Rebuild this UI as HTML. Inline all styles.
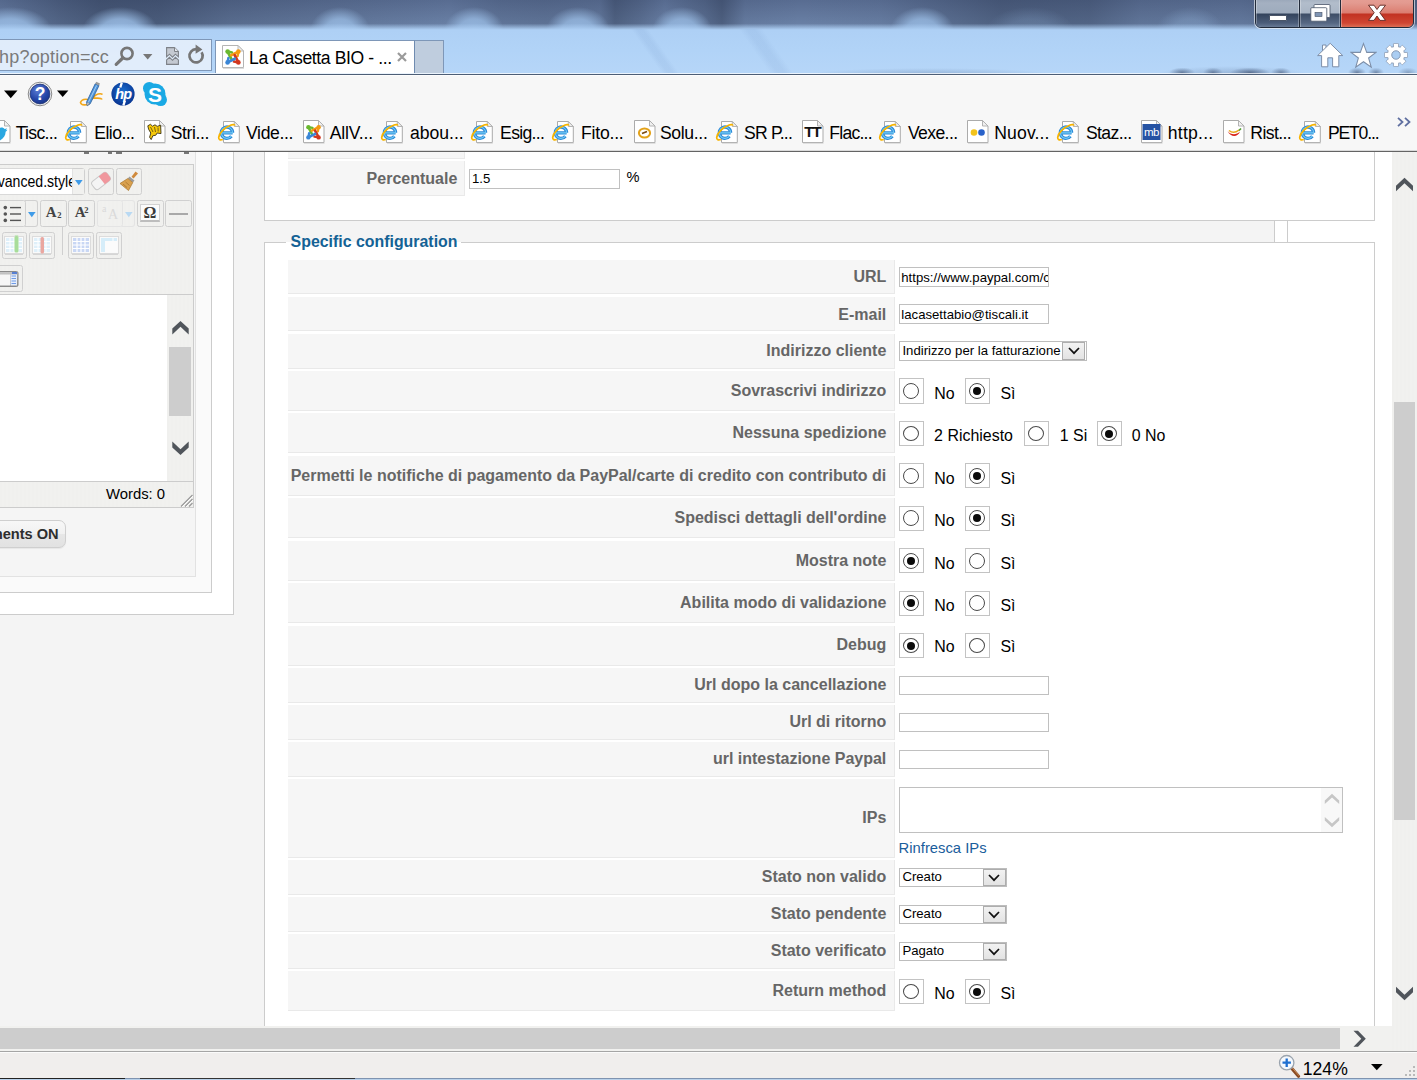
<!DOCTYPE html>
<html lang="it"><head><meta charset="utf-8"><title>La Casetta BIO - Amministrazione</title>
<style>
*{box-sizing:border-box;margin:0;padding:0}
html,body{width:1417px;height:1080px;overflow:hidden;background:#fff}
body{position:relative;font-family:"Liberation Sans",Arial,sans-serif;color:#000}
div,span,svg,a,b,i{position:absolute;display:block;white-space:nowrap}
.ui{font-family:"Liberation Sans",Arial,sans-serif;color:#000}
.lbl{font-weight:bold;color:#666}
.rad{border:1px solid #c3c3c3;background:#fff}
.rad i{left:3px;width:16px;border:1px solid #4a4a4a;border-radius:50%;background:#fff}
.inp{border:1px solid #c0c0c0;background:#fff;overflow:hidden}
.cell{background:#f6f6f6;border-bottom:1px solid #e9e9e9;border-right:1px solid #e9e9e9}
.tb{border:1px solid #d0d0d0;border-radius:2.5px}
</style></head>
<body>

<div style="left:0px;top:0px;width:1417px;height:74px;background:radial-gradient(ellipse 13px 5px at 1182px 72.500px, rgba(48,64,96,0.55), rgba(60,80,115,0) 100%),radial-gradient(ellipse 10px 5px at 1213px 72.500px, rgba(48,64,96,0.5), rgba(60,80,115,0) 100%),radial-gradient(ellipse 20px 5px at 1250px 72.500px, rgba(48,64,96,0.6), rgba(60,80,115,0) 100%),radial-gradient(ellipse 10px 5px at 1281px 72.500px, rgba(48,64,96,0.5), rgba(60,80,115,0) 100%),radial-gradient(ellipse 9px 5px at 1357px 72.500px, rgba(48,64,96,0.55), rgba(60,80,115,0) 100%),radial-gradient(ellipse 8px 5px at 1376px 72.500px, rgba(48,64,96,0.5), rgba(60,80,115,0) 100%),radial-gradient(ellipse 10px 5px at 1408px 72.500px, rgba(48,64,96,0.35), rgba(60,80,115,0) 100%),radial-gradient(ellipse 75px 8px at 1232px 74px, rgba(70,92,130,.28), rgba(60,80,115,0) 100%),radial-gradient(ellipse 120px 6px at 930px 74px, rgba(80,105,145,.3), rgba(80,105,145,0) 100%),linear-gradient(to bottom, rgba(172,206,243,0) 23.5px, rgba(172,206,243,.5) 27px, rgba(174,208,245,1) 30px, rgba(177,211,247,1) 50px, rgba(182,214,248,1) 74px),radial-gradient(ellipse 42px 24px at 10px 31px, rgba(152,186,226,1) 0, rgba(150,184,224,0.85) 50%, rgba(146,178,218,0) 100%),radial-gradient(ellipse 38px 24px at 120px 31px, rgba(152,186,226,1) 0, rgba(150,184,224,0.85) 50%, rgba(146,178,218,0) 100%),radial-gradient(ellipse 30px 24px at 340px 31px, rgba(152,186,226,0.95) 0, rgba(150,184,224,0.81) 50%, rgba(146,178,218,0) 100%),radial-gradient(ellipse 30px 24px at 474px 31px, rgba(152,186,226,0.95) 0, rgba(150,184,224,0.81) 50%, rgba(146,178,218,0) 100%),radial-gradient(ellipse 32px 24px at 578px 31px, rgba(152,186,226,0.95) 0, rgba(150,184,224,0.81) 50%, rgba(146,178,218,0) 100%),radial-gradient(ellipse 30px 24px at 682px 31px, rgba(152,186,226,0.95) 0, rgba(150,184,224,0.81) 50%, rgba(146,178,218,0) 100%),radial-gradient(ellipse 32px 24px at 922px 31px, rgba(152,186,226,0.95) 0, rgba(150,184,224,0.81) 50%, rgba(146,178,218,0) 100%),radial-gradient(ellipse 34px 24px at 1190px 31px, rgba(152,186,226,0.35) 0, rgba(150,184,224,0.30) 50%, rgba(146,178,218,0) 100%),radial-gradient(ellipse 44px 24px at 1030px 31px, rgba(152,186,226,0.25) 0, rgba(150,184,224,0.21) 50%, rgba(146,178,218,0) 100%),linear-gradient(90deg,rgba(28,38,60,0.05) 0px,rgba(28,38,60,0.3) 60px,rgba(28,38,60,0.42) 100px,rgba(28,38,60,0.4) 160px,rgba(28,38,60,0.22) 230px,rgba(28,38,60,0.12) 320px,rgba(28,38,60,0.05) 400px,rgba(28,38,60,0.0) 450px,rgba(28,38,60,0.12) 500px,rgba(28,38,60,0.15) 545px,rgba(28,38,60,0.1) 600px,rgba(28,38,60,0.34) 615px,rgba(28,38,60,0.2) 640px,rgba(28,38,60,0.02) 665px,rgba(28,38,60,0.22) 705px,rgba(28,38,60,0.36) 722px,rgba(28,38,60,0.06) 745px,rgba(28,38,60,0.0) 800px,rgba(28,38,60,0.04) 880px,rgba(28,38,60,0.22) 950px,rgba(28,38,60,0.34) 1000px,rgba(28,38,60,0.3) 1090px,rgba(28,38,60,0.12) 1140px,rgba(28,38,60,0.08) 1240px,rgba(28,38,60,0.2) 1300px,rgba(28,38,60,0.25) 1417px),linear-gradient(to bottom,#586c91 0px,#61769b 12px,#6980a5 24px,#7a93b8 29px,#a9cbf0 33px);"></div>
<div style="left:646px;top:29px;width:18px;height:44px;background:linear-gradient(90deg,rgba(110,145,195,0),rgba(110,145,195,.13) 35%,rgba(110,145,195,.13) 65%,rgba(110,145,195,0));transform:skewX(35deg)"></div>
<div style="left:754px;top:29px;width:24px;height:44px;background:linear-gradient(90deg,rgba(110,145,195,0),rgba(110,145,195,.13) 35%,rgba(110,145,195,.13) 65%,rgba(110,145,195,0));transform:skewX(35deg)"></div>
<div style="left:0px;top:73px;width:1417px;height:1px;background:rgba(255,255,255,.72)"></div>
<div style="left:0px;top:74px;width:1417px;height:1px;background:#4d5e76"></div>
<div style="left:-10px;top:39px;width:222px;height:32px;border:1px solid #7e97b8;background:rgba(236,243,251,.8);"></div>
<span class="ui" style="left:-1px;top:48.36px;font-size:18.0px;line-height:18.0px;color:#7a7a7a;letter-spacing:0.2px">hp?option=cc</span>
<svg style="left:113px;top:44px" width="24" height="24" viewBox="0 0 24 24"><circle cx="14" cy="9.5" r="5.6" fill="none" stroke="#767676" stroke-width="2.6"/><path d="M9.8 14 L3.2 20.4" stroke="#767676" stroke-width="3.2" stroke-linecap="round"/></svg>
<svg style="left:143.300px;top:54px" width="10" height="6" viewBox="0 0 10 6"><path d="M0 0H9.4L4.7 5.4Z" fill="#777"/></svg>
<svg style="left:166px;top:46.500px" width="13" height="18" viewBox="0 0 13 18"><path d="M.6 .6H8.500L12.400 4.500V9.800L9.400 7.200 6.500 10.200 3.500 7.200 .6 9.800Z" fill="#c4c9d1" stroke="#7d8187" stroke-width="1.100"/><path d="M.6 17.400V12.900L3.500 10.300 6.500 13.300 9.400 10.300 12.400 12.900V17.400Z" fill="#c4c9d1" stroke="#7d8187" stroke-width="1.100"/><path d="M8.500 .6V4.500H12.400" fill="#e3e7ec" stroke="#7d8187" stroke-width="1"/></svg>
<svg style="left:186px;top:43px" width="20" height="22" viewBox="0 0 20 22"><path d="M15.6 9.2A6.6 6.6 0 1 1 10.2 6.2" fill="none" stroke="#767676" stroke-width="2.7"/><path d="M9.6 1.6L16.4 6.4 9.6 10.8Z" fill="#767676"/></svg>
<div style="left:215px;top:40px;width:200px;height:33px;background:#fff;border:1px solid #7e97b8;border-bottom:none;"></div>
<div style="left:414px;top:40px;width:30px;height:33px;background:#bfcdde;border:1px solid #7e97b8;border-left:1.500px solid #6f8bb0;border-bottom:none;"></div>
<svg style="left:222px;top:45px" width="23" height="24" viewBox="0 0 23 24"><path d="M.5 .5H16L21.500 6V22.500H.5Z" fill="#fff" stroke="#b4b4b4"/><path d="M16 .5V6H21.500Z" fill="#f0f0f0" stroke="#b4b4b4" stroke-width=".9"/><path d="M1 23.300H22" stroke="#cfcfcf" stroke-width=".9"/><g transform="translate(11 12) rotate(0) scale(1.0)" stroke="#69b82f" fill="#69b82f" stroke-linecap="round"><circle cx="-5.400" cy="-5.400" r="2.300" stroke="none"/><path d="M-5.400 -5.400L-1.700 1.800" stroke-width="2.700" fill="none"/><path d="M-5.400 -5.400L-1 -4.600" stroke-width="2.500" fill="none"/></g><g transform="translate(11 12) rotate(90) scale(1.0)" stroke="#f49a12" fill="#f49a12" stroke-linecap="round"><circle cx="-5.400" cy="-5.400" r="2.300" stroke="none"/><path d="M-5.400 -5.400L-1.700 1.800" stroke-width="2.700" fill="none"/><path d="M-5.400 -5.400L-1 -4.600" stroke-width="2.500" fill="none"/></g><g transform="translate(11 12) rotate(180) scale(1.0)" stroke="#d2371f" fill="#d2371f" stroke-linecap="round"><circle cx="-5.400" cy="-5.400" r="2.300" stroke="none"/><path d="M-5.400 -5.400L-1.700 1.800" stroke-width="2.700" fill="none"/><path d="M-5.400 -5.400L-1 -4.600" stroke-width="2.500" fill="none"/></g><g transform="translate(11 12) rotate(270) scale(1.0)" stroke="#3a86d6" fill="#3a86d6" stroke-linecap="round"><circle cx="-5.400" cy="-5.400" r="2.300" stroke="none"/><path d="M-5.400 -5.400L-1.700 1.800" stroke-width="2.700" fill="none"/><path d="M-5.400 -5.400L-1 -4.600" stroke-width="2.500" fill="none"/></g></svg>
<span class="ui" style="left:249px;top:49.70px;font-size:17.6px;line-height:17.6px;letter-spacing:-0.39px">La Casetta BIO - ...</span>
<svg style="left:397px;top:52px" width="10" height="10" viewBox="0 0 10 10"><path d="M1 1L9 9M9 1L1 9" stroke="#9a9a9a" stroke-width="2.2"/></svg>
<div style="left:1255px;top:-6px;width:159px;height:34px;border:1px solid #222b3a;border-radius:6px;box-shadow:0 0 0 1px rgba(255,255,255,.6);overflow:hidden;"><div style="left:0px;top:0px;width:44px;height:34px;background:linear-gradient(to bottom,#8c9aae 0,#a4b0c1 8px,#9eabbd 18px,#33435c 19px,#4c5d79 28px,#6f819c 33px);border-right:1px solid #222b3a;box-shadow:inset 0 0 0 1px rgba(255,255,255,.3)"></div><div style="left:44px;top:0px;width:41px;height:34px;background:linear-gradient(to bottom,#98a5b7 0,#b2bdcb 8px,#a9b5c5 18px,#3d4d66 19px,#566782 28px,#7687a0 33px);border-right:1px solid #222b3a;box-shadow:inset 0 0 0 1px rgba(255,255,255,.3)"></div><div style="left:85px;top:0px;width:74px;height:34px;background:linear-gradient(to bottom,#e7a198 0,#e39a90 8px,#db7d70 18px,#c23222 19px,#cf4632 28px,#e0785c 33px);box-shadow:inset 0 0 0 1px rgba(255,255,255,.3)"></div></div>
<div style="left:1269px;top:15px;width:18px;height:5.5px;background:#fff;border:1px solid #4a5568;border-radius:1px"></div>
<svg style="left:1309px;top:3px" width="23" height="20" viewBox="0 0 23 20"><rect x="5" y="1.500" width="16" height="13" rx="1" fill="#fff" stroke="#4a5568" stroke-width=".8"/><rect x="8.500" y="5" width="9" height="6" fill="#7f90aa"/><rect x="1.800" y="4.700" width="16" height="13.500" rx="1" fill="#fff" stroke="#4a5568" stroke-width=".8"/><rect x="6" y="9.300" width="7" height="4.300" fill="#7f95b4" stroke="#4a5568" stroke-width=".6"/></svg>
<svg style="left:1367px;top:4px" width="20" height="18" viewBox="0 0 20 18"><path d="M1.500 1.200H7L10 5.500 13 1.200H18.500L12.800 8.700 18.500 16.400H13L10 12 7 16.400H1.500L7.200 8.700Z" fill="#fff" stroke="#5e241e" stroke-width=".9"/></svg>
<svg style="left:1316px;top:42px" width="28" height="26" viewBox="0 0 28 26"><path d="M6.500 9.500V3H10V6.200" fill="#fff" stroke="#7c8ea8" stroke-width="1"/><path d="M14.200 1.300L26.800 13.600H22.800V24.800H16.600V15.800H11.800V24.800H5.600V13.600H1.600Z" fill="#fff" stroke="#7c8ea8" stroke-width="1"/></svg>
<svg style="left:1349.500px;top:41.500px" width="27" height="27" viewBox="0 0 26 26"><path d="M13 1.500L16.100 10H25L17.900 15.400 20.500 24.300 13 19 5.500 24.300 8.100 15.400 1 10H9.900Z" fill="#fff" stroke="#7c8ea8" stroke-width="1"/></svg>
<svg style="left:1383px;top:42px" width="26" height="26" viewBox="-14 -14 28 28"><rect x="-2.700" y="-12.300" width="5.400" height="5" rx=".6" fill="#fff" stroke="#7c8ea8" stroke-width=".9" transform="rotate(0)"/><rect x="-2.700" y="-12.300" width="5.400" height="5" rx=".6" fill="#fff" stroke="#7c8ea8" stroke-width=".9" transform="rotate(45)"/><rect x="-2.700" y="-12.300" width="5.400" height="5" rx=".6" fill="#fff" stroke="#7c8ea8" stroke-width=".9" transform="rotate(90)"/><rect x="-2.700" y="-12.300" width="5.400" height="5" rx=".6" fill="#fff" stroke="#7c8ea8" stroke-width=".9" transform="rotate(135)"/><rect x="-2.700" y="-12.300" width="5.400" height="5" rx=".6" fill="#fff" stroke="#7c8ea8" stroke-width=".9" transform="rotate(180)"/><rect x="-2.700" y="-12.300" width="5.400" height="5" rx=".6" fill="#fff" stroke="#7c8ea8" stroke-width=".9" transform="rotate(225)"/><rect x="-2.700" y="-12.300" width="5.400" height="5" rx=".6" fill="#fff" stroke="#7c8ea8" stroke-width=".9" transform="rotate(270)"/><rect x="-2.700" y="-12.300" width="5.400" height="5" rx=".6" fill="#fff" stroke="#7c8ea8" stroke-width=".9" transform="rotate(315)"/><circle r="9.400" fill="#fff" stroke="#7c8ea8" stroke-width=".9"/><rect x="-2.300" y="-12" width="4.600" height="5" fill="#fff" transform="rotate(0)"/><rect x="-2.300" y="-12" width="4.600" height="5" fill="#fff" transform="rotate(45)"/><rect x="-2.300" y="-12" width="4.600" height="5" fill="#fff" transform="rotate(90)"/><rect x="-2.300" y="-12" width="4.600" height="5" fill="#fff" transform="rotate(135)"/><rect x="-2.300" y="-12" width="4.600" height="5" fill="#fff" transform="rotate(180)"/><rect x="-2.300" y="-12" width="4.600" height="5" fill="#fff" transform="rotate(225)"/><rect x="-2.300" y="-12" width="4.600" height="5" fill="#fff" transform="rotate(270)"/><rect x="-2.300" y="-12" width="4.600" height="5" fill="#fff" transform="rotate(315)"/><circle r="4.600" fill="#aacdf2" stroke="#7c8ea8" stroke-width=".9"/></svg>
<div style="left:0px;top:75px;width:1417px;height:76px;background:#f7f7f7"></div>
<div style="left:0px;top:75px;width:1417px;height:1px;background:#fdfdfd"></div>
<div style="left:0px;top:150px;width:1417px;height:1px;background:#dadada"></div>
<div style="left:0px;top:151px;width:1417px;height:1px;background:#646464"></div>
<svg style="left:4px;top:90px" width="14" height="9" viewBox="0 0 14 9"><path d="M0 .5H13.500L6.750 8.200Z" fill="#000"/></svg>
<svg style="left:57px;top:90px" width="12" height="8" viewBox="0 0 12 8"><path d="M0 .5H11.400L5.700 7Z" fill="#000"/></svg>
<svg style="left:27px;top:81px" width="26" height="26" viewBox="0 0 26 26"><defs><radialGradient id="hg" cx=".4" cy=".3" r=".8"><stop offset="0" stop-color="#5d7fd6"/><stop offset=".6" stop-color="#2546a8"/><stop offset="1" stop-color="#16307f"/></radialGradient></defs><circle cx="13" cy="13" r="11.800" fill="#f2f2f2" stroke="#7d7d7d" stroke-width=".9"/><circle cx="13" cy="13" r="9.900" fill="url(#hg)" stroke="#1a2f6e" stroke-width=".8"/><text x="13" y="19.300" font-family="Liberation Sans,Arial,sans-serif" font-weight="bold" font-size="17.500" text-anchor="middle" fill="#fff">?</text></svg>
<svg style="left:78px;top:81px" width="27" height="27" viewBox="0 0 27 27"><path d="M2.500 21.500C4 17.500 12 17 11.500 21 11 24.500 3 25 2.500 21.500ZM11 20.500C15 18.500 15.500 14 20 13 22 12.600 24 13 24.500 13.500M15 17C18 17.500 23 16 24 18.500" fill="none" stroke="#f2a81c" stroke-width="1.700"/><path d="M17.200 2.800L21 4.600 12.200 22.800 9.200 24.800 8.600 21Z" fill="#4f95dc" stroke="#2a5f9f" stroke-width=".8"/><path d="M18.200 .8L22 2.600 21 4.600 17.200 2.800Z" fill="#9a9a9a"/><path d="M18.600 4.500L10.300 21.500" stroke="#a8d0f5" stroke-width="1"/><path d="M9 21.300L11.500 22.500 9.200 24.800Z" fill="#cfcfcf" stroke="#777" stroke-width=".5"/></svg>
<svg style="left:111px;top:82px" width="24" height="24" viewBox="0 0 24 24"><defs><radialGradient id="hpg" cx=".5" cy=".4" r=".7"><stop offset="0" stop-color="#1a6fd0"/><stop offset="1" stop-color="#062a86"/></radialGradient></defs><circle cx="12" cy="12" r="11.600" fill="url(#hpg)"/><text x="12.300" y="16.600" font-family="Liberation Sans,Arial,sans-serif" font-style="italic" font-weight="bold" font-size="14.500" text-anchor="middle" fill="#fff" letter-spacing="-.8">hp</text><path d="M9.300 5.500L10.800 .6M12.400 23.400L13.900 18.600" stroke="#fff" stroke-width="2.300"/></svg>
<svg style="left:142px;top:81px" width="26" height="26" viewBox="0 0 26 26"><circle cx="13" cy="13" r="10.500" fill="#1aa9e4"/><circle cx="7.300" cy="7.300" r="6.300" fill="#1aa9e4"/><circle cx="18.700" cy="18.700" r="6.300" fill="#1aa9e4"/><text x="13" y="20.500" font-family="Liberation Sans,Arial,sans-serif" font-weight="bold" font-size="21" text-anchor="middle" fill="#fff">S</text></svg>
<svg style="left:-11px;top:120px" width="22" height="24" viewBox="0 0 22 24"><path d="M.5 .5H15.500L21 6V22.500H.5Z" fill="#fff" stroke="#ababab"/><path d="M15.500 .5V6H21Z" fill="#f0f0f0" stroke="#ababab" stroke-width=".9"/><path d="M1 23.300H21.500" stroke="#d6d6d6" stroke-width=".9"/><path d="M10 8.500C12 7 14.500 7.500 15.500 9 16.300 9 17.200 8.600 18 8.200 17.700 9.200 17.200 9.800 16.500 10.300 17.200 10.300 17.800 10.100 18.400 9.800 17.900 10.700 17.300 11.300 16.600 11.800 16.800 17 12 22 5 21.500 3 21.300 1 20.600 0 20V8Z" fill="#2aa7e1"/></svg>
<span class="ui fav" style="left:15.7px;top:125.00px;font-size:17.6px;line-height:17.6px;letter-spacing:-0.67px">Tisc...</span>
<svg style="left:64px;top:120px" width="24" height="24" viewBox="0 0 24 24"><path d="M6.500 1.500H17.300L22.300 6.500V22.500H6.500Z" fill="#fff" stroke="#ababab"/><path d="M17.300 1.500V6.500H22.300Z" fill="#f0f0f0" stroke="#ababab" stroke-width=".9"/><path d="M7 23.300H22.800" stroke="#d6d6d6" stroke-width=".9"/><path d="M15.600000000000001 12.799999999999999A5.700 5.700 0 1 0 14.4 16.2M4.7 12.9H15.600000000000001" fill="none" stroke="#2d8ad8" stroke-width="3.300"/><path d="M15.600000000000001 12.799999999999999A5.700 5.700 0 1 0 14.4 16.2M4.7 12.9H15.600000000000001" fill="none" stroke="#74cdf6" stroke-width="1.100"/><path d="M17.600 5.600C17.800 4.600 16 4.300 13.500 5.200 8 7.200 2.200 13 1.700 17.300 1.400 19.800 3.400 20.300 5.800 19.500" fill="none" stroke="#f8b400" stroke-width="1.700"/></svg>
<span class="ui fav" style="left:94.3px;top:125.00px;font-size:17.6px;line-height:17.6px;letter-spacing:-0.56px">Elio...</span>
<svg style="left:144px;top:120px" width="22" height="24" viewBox="0 0 22 24"><path d="M.5 .5H15.500L21 6V22.500H.5Z" fill="#fff" stroke="#ababab"/><path d="M15.500 .5V6H21Z" fill="#f0f0f0" stroke="#ababab" stroke-width=".9"/><path d="M1 23.300H21.500" stroke="#d6d6d6" stroke-width=".9"/><path d="M3.800 5.800L6.500 4.300 8.500 6.200 11 4.800 13.200 6.400 16.600 5.200 17 13.600 13.200 13 11.800 15.200 8.800 15.800 7.200 19.600 5.600 17.200 6.800 13 4.600 9.200Z" fill="#f6c90a" stroke="#3a3214" stroke-width=".9"/><path d="M6.500 7L9 12M10.500 7L11.500 12M14 7.500L14.200 11.500" stroke="#5a4a10" stroke-width=".8"/></svg>
<span class="ui fav" style="left:170.70000000000002px;top:125.00px;font-size:17.6px;line-height:17.6px;letter-spacing:-0.38px">Stri...</span>
<svg style="left:216.6px;top:120px" width="24" height="24" viewBox="0 0 24 24"><path d="M6.500 1.500H17.300L22.300 6.500V22.500H6.500Z" fill="#fff" stroke="#ababab"/><path d="M17.300 1.500V6.500H22.300Z" fill="#f0f0f0" stroke="#ababab" stroke-width=".9"/><path d="M7 23.300H22.800" stroke="#d6d6d6" stroke-width=".9"/><path d="M15.600000000000001 12.799999999999999A5.700 5.700 0 1 0 14.4 16.2M4.7 12.9H15.600000000000001" fill="none" stroke="#2d8ad8" stroke-width="3.300"/><path d="M15.600000000000001 12.799999999999999A5.700 5.700 0 1 0 14.4 16.2M4.7 12.9H15.600000000000001" fill="none" stroke="#74cdf6" stroke-width="1.100"/><path d="M17.600 5.600C17.800 4.600 16 4.300 13.500 5.200 8 7.200 2.200 13 1.700 17.300 1.400 19.800 3.400 20.300 5.800 19.500" fill="none" stroke="#f8b400" stroke-width="1.700"/></svg>
<span class="ui fav" style="left:246.0px;top:125.00px;font-size:17.6px;line-height:17.6px;letter-spacing:-0.35px">Vide...</span>
<svg style="left:303.3px;top:120px" width="22" height="24" viewBox="0 0 22 24"><path d="M.5 .5H15.500L21 6V22.500H.5Z" fill="#fff" stroke="#ababab"/><path d="M15.500 .5V6H21Z" fill="#f0f0f0" stroke="#ababab" stroke-width=".9"/><path d="M1 23.300H21.500" stroke="#d6d6d6" stroke-width=".9"/><g transform="translate(10.5 12.3) rotate(0) scale(0.95)" stroke="#69b82f" fill="#69b82f" stroke-linecap="round"><circle cx="-5.400" cy="-5.400" r="2.300" stroke="none"/><path d="M-5.400 -5.400L-1.700 1.800" stroke-width="2.700" fill="none"/><path d="M-5.400 -5.400L-1 -4.600" stroke-width="2.500" fill="none"/></g><g transform="translate(10.5 12.3) rotate(90) scale(0.95)" stroke="#f49a12" fill="#f49a12" stroke-linecap="round"><circle cx="-5.400" cy="-5.400" r="2.300" stroke="none"/><path d="M-5.400 -5.400L-1.700 1.800" stroke-width="2.700" fill="none"/><path d="M-5.400 -5.400L-1 -4.600" stroke-width="2.500" fill="none"/></g><g transform="translate(10.5 12.3) rotate(180) scale(0.95)" stroke="#d2371f" fill="#d2371f" stroke-linecap="round"><circle cx="-5.400" cy="-5.400" r="2.300" stroke="none"/><path d="M-5.400 -5.400L-1.700 1.800" stroke-width="2.700" fill="none"/><path d="M-5.400 -5.400L-1 -4.600" stroke-width="2.500" fill="none"/></g><g transform="translate(10.5 12.3) rotate(270) scale(0.95)" stroke="#3a86d6" fill="#3a86d6" stroke-linecap="round"><circle cx="-5.400" cy="-5.400" r="2.300" stroke="none"/><path d="M-5.400 -5.400L-1.700 1.800" stroke-width="2.700" fill="none"/><path d="M-5.400 -5.400L-1 -4.600" stroke-width="2.500" fill="none"/></g></svg>
<span class="ui fav" style="left:329.7px;top:125.00px;font-size:17.6px;line-height:17.6px;letter-spacing:-0.13px">AllV...</span>
<svg style="left:380px;top:120px" width="24" height="24" viewBox="0 0 24 24"><path d="M6.500 1.500H17.300L22.300 6.500V22.500H6.500Z" fill="#fff" stroke="#ababab"/><path d="M17.300 1.500V6.500H22.300Z" fill="#f0f0f0" stroke="#ababab" stroke-width=".9"/><path d="M7 23.300H22.800" stroke="#d6d6d6" stroke-width=".9"/><path d="M15.600000000000001 12.799999999999999A5.700 5.700 0 1 0 14.4 16.2M4.7 12.9H15.600000000000001" fill="none" stroke="#2d8ad8" stroke-width="3.300"/><path d="M15.600000000000001 12.799999999999999A5.700 5.700 0 1 0 14.4 16.2M4.7 12.9H15.600000000000001" fill="none" stroke="#74cdf6" stroke-width="1.100"/><path d="M17.600 5.600C17.800 4.600 16 4.300 13.500 5.200 8 7.200 2.200 13 1.700 17.300 1.400 19.800 3.400 20.300 5.800 19.500" fill="none" stroke="#f8b400" stroke-width="1.700"/></svg>
<span class="ui fav" style="left:410.0px;top:125.00px;font-size:17.6px;line-height:17.6px;letter-spacing:-0.03px">abou...</span>
<svg style="left:470px;top:120px" width="24" height="24" viewBox="0 0 24 24"><path d="M6.500 1.500H17.300L22.300 6.500V22.500H6.500Z" fill="#fff" stroke="#ababab"/><path d="M17.300 1.500V6.500H22.300Z" fill="#f0f0f0" stroke="#ababab" stroke-width=".9"/><path d="M7 23.300H22.800" stroke="#d6d6d6" stroke-width=".9"/><path d="M15.600000000000001 12.799999999999999A5.700 5.700 0 1 0 14.4 16.2M4.7 12.9H15.600000000000001" fill="none" stroke="#2d8ad8" stroke-width="3.300"/><path d="M15.600000000000001 12.799999999999999A5.700 5.700 0 1 0 14.4 16.2M4.7 12.9H15.600000000000001" fill="none" stroke="#74cdf6" stroke-width="1.100"/><path d="M17.600 5.600C17.800 4.600 16 4.300 13.500 5.200 8 7.200 2.200 13 1.700 17.300 1.400 19.800 3.400 20.300 5.800 19.500" fill="none" stroke="#f8b400" stroke-width="1.700"/></svg>
<span class="ui fav" style="left:500.1px;top:125.00px;font-size:17.6px;line-height:17.6px;letter-spacing:-0.7px">Esig...</span>
<svg style="left:551px;top:120px" width="24" height="24" viewBox="0 0 24 24"><path d="M6.500 1.500H17.300L22.300 6.500V22.500H6.500Z" fill="#fff" stroke="#ababab"/><path d="M17.300 1.500V6.500H22.300Z" fill="#f0f0f0" stroke="#ababab" stroke-width=".9"/><path d="M7 23.300H22.800" stroke="#d6d6d6" stroke-width=".9"/><path d="M15.600000000000001 12.799999999999999A5.700 5.700 0 1 0 14.4 16.2M4.7 12.9H15.600000000000001" fill="none" stroke="#2d8ad8" stroke-width="3.300"/><path d="M15.600000000000001 12.799999999999999A5.700 5.700 0 1 0 14.4 16.2M4.7 12.9H15.600000000000001" fill="none" stroke="#74cdf6" stroke-width="1.100"/><path d="M17.600 5.600C17.800 4.600 16 4.300 13.500 5.200 8 7.200 2.200 13 1.700 17.300 1.400 19.800 3.400 20.300 5.800 19.500" fill="none" stroke="#f8b400" stroke-width="1.700"/></svg>
<span class="ui fav" style="left:581.0999999999999px;top:125.00px;font-size:17.6px;line-height:17.6px;letter-spacing:-0.23px">Fito...</span>
<svg style="left:633.5px;top:120px" width="22" height="24" viewBox="0 0 22 24"><path d="M.5 .5H15.500L21 6V22.500H.5Z" fill="#fff" stroke="#ababab"/><path d="M15.500 .5V6H21Z" fill="#f0f0f0" stroke="#ababab" stroke-width=".9"/><path d="M1 23.300H21.500" stroke="#d6d6d6" stroke-width=".9"/><ellipse cx="10.500" cy="13" rx="5.600" ry="4.600" fill="#fff" stroke="#e3a21a" stroke-width="2"/><path d="M8 13.500L13 11.500" stroke="#7a4a12" stroke-width="1.600"/></svg>
<span class="ui fav" style="left:659.9px;top:125.00px;font-size:17.6px;line-height:17.6px;letter-spacing:-0.33px">Solu...</span>
<svg style="left:714.5px;top:120px" width="24" height="24" viewBox="0 0 24 24"><path d="M6.500 1.500H17.300L22.300 6.500V22.500H6.500Z" fill="#fff" stroke="#ababab"/><path d="M17.300 1.500V6.500H22.300Z" fill="#f0f0f0" stroke="#ababab" stroke-width=".9"/><path d="M7 23.300H22.800" stroke="#d6d6d6" stroke-width=".9"/><path d="M15.600000000000001 12.799999999999999A5.700 5.700 0 1 0 14.4 16.2M4.7 12.9H15.600000000000001" fill="none" stroke="#2d8ad8" stroke-width="3.300"/><path d="M15.600000000000001 12.799999999999999A5.700 5.700 0 1 0 14.4 16.2M4.7 12.9H15.600000000000001" fill="none" stroke="#74cdf6" stroke-width="1.100"/><path d="M17.600 5.600C17.800 4.600 16 4.300 13.500 5.200 8 7.200 2.200 13 1.700 17.300 1.400 19.800 3.400 20.300 5.800 19.500" fill="none" stroke="#f8b400" stroke-width="1.700"/></svg>
<span class="ui fav" style="left:744.0px;top:125.00px;font-size:17.6px;line-height:17.6px;letter-spacing:-0.77px">SR P...</span>
<svg style="left:802px;top:120px" width="22" height="24" viewBox="0 0 22 24"><path d="M.5 .5H15.500L21 6V22.500H.5Z" fill="#fff" stroke="#ababab"/><path d="M15.500 .5V6H21Z" fill="#f0f0f0" stroke="#ababab" stroke-width=".9"/><path d="M1 23.300H21.500" stroke="#d6d6d6" stroke-width=".9"/><text x="10.300" y="17.300" font-family="Liberation Sans,Arial,sans-serif" font-weight="bold" font-size="15.500" text-anchor="middle" fill="#111" letter-spacing="-1.500">TT</text></svg>
<span class="ui fav" style="left:829.3px;top:125.00px;font-size:17.6px;line-height:17.6px;letter-spacing:-0.77px">Flac...</span>
<svg style="left:878px;top:120px" width="24" height="24" viewBox="0 0 24 24"><path d="M6.500 1.500H17.300L22.300 6.500V22.500H6.500Z" fill="#fff" stroke="#ababab"/><path d="M17.300 1.500V6.500H22.300Z" fill="#f0f0f0" stroke="#ababab" stroke-width=".9"/><path d="M7 23.300H22.800" stroke="#d6d6d6" stroke-width=".9"/><path d="M15.600000000000001 12.799999999999999A5.700 5.700 0 1 0 14.4 16.2M4.7 12.9H15.600000000000001" fill="none" stroke="#2d8ad8" stroke-width="3.300"/><path d="M15.600000000000001 12.799999999999999A5.700 5.700 0 1 0 14.4 16.2M4.7 12.9H15.600000000000001" fill="none" stroke="#74cdf6" stroke-width="1.100"/><path d="M17.600 5.600C17.800 4.600 16 4.300 13.500 5.200 8 7.200 2.200 13 1.700 17.300 1.400 19.800 3.400 20.300 5.800 19.500" fill="none" stroke="#f8b400" stroke-width="1.700"/></svg>
<span class="ui fav" style="left:907.9px;top:125.00px;font-size:17.6px;line-height:17.6px;letter-spacing:-0.6px">Vexe...</span>
<svg style="left:967px;top:120px" width="22" height="24" viewBox="0 0 22 24"><path d="M.5 .5H15.500L21 6V22.500H.5Z" fill="#fff" stroke="#ababab"/><path d="M15.500 .5V6H21Z" fill="#f0f0f0" stroke="#ababab" stroke-width=".9"/><path d="M1 23.300H21.500" stroke="#d6d6d6" stroke-width=".9"/><circle cx="7" cy="12.500" r="3.300" fill="#f3c31c"/><circle cx="14.500" cy="12.500" r="3.300" fill="#2a62c9"/></svg>
<span class="ui fav" style="left:994.3px;top:125.00px;font-size:17.6px;line-height:17.6px;letter-spacing:0.12px">Nuov...</span>
<svg style="left:1056px;top:120px" width="24" height="24" viewBox="0 0 24 24"><path d="M6.500 1.500H17.300L22.300 6.500V22.500H6.500Z" fill="#fff" stroke="#ababab"/><path d="M17.300 1.500V6.500H22.300Z" fill="#f0f0f0" stroke="#ababab" stroke-width=".9"/><path d="M7 23.300H22.800" stroke="#d6d6d6" stroke-width=".9"/><path d="M15.600000000000001 12.799999999999999A5.700 5.700 0 1 0 14.4 16.2M4.7 12.9H15.600000000000001" fill="none" stroke="#2d8ad8" stroke-width="3.300"/><path d="M15.600000000000001 12.799999999999999A5.700 5.700 0 1 0 14.4 16.2M4.7 12.9H15.600000000000001" fill="none" stroke="#74cdf6" stroke-width="1.100"/><path d="M17.600 5.600C17.800 4.600 16 4.300 13.500 5.200 8 7.200 2.200 13 1.700 17.300 1.400 19.800 3.400 20.300 5.800 19.500" fill="none" stroke="#f8b400" stroke-width="1.700"/></svg>
<span class="ui fav" style="left:1085.8999999999999px;top:125.00px;font-size:17.6px;line-height:17.6px;letter-spacing:-0.61px">Staz...</span>
<svg style="left:1141px;top:120px" width="22" height="24" viewBox="0 0 22 24"><path d="M.5 .5H15.500L21 6V22.500H.5Z" fill="#fff" stroke="#ababab"/><path d="M15.500 .5V6H21Z" fill="#f0f0f0" stroke="#ababab" stroke-width=".9"/><path d="M1 23.300H21.500" stroke="#d6d6d6" stroke-width=".9"/><rect x="1.500" y="4" width="18" height="16" fill="#2653a3"/><text x="10.500" y="16.300" font-family="Liberation Sans,Arial,sans-serif" font-size="11.500" text-anchor="middle" fill="#fff" letter-spacing="-.5">mb</text></svg>
<span class="ui fav" style="left:1167.8px;top:125.00px;font-size:17.6px;line-height:17.6px;letter-spacing:0.24px">http...</span>
<svg style="left:1223px;top:120px" width="22" height="24" viewBox="0 0 22 24"><path d="M.5 .5H15.500L21 6V22.500H.5Z" fill="#fff" stroke="#ababab"/><path d="M15.500 .5V6H21Z" fill="#f0f0f0" stroke="#ababab" stroke-width=".9"/><path d="M1 23.300H21.500" stroke="#d6d6d6" stroke-width=".9"/><path d="M4.500 11C8 15 13 15.500 17 11.500 15 17 8 18 4.500 11Z" fill="#d8261c"/><path d="M6 10.500C9 13 13 12.500 16 10" fill="none" stroke="#e8a81c" stroke-width="1.500"/><path d="M16 10.500L18 8.500" stroke="#4a9a2a" stroke-width="1.600"/></svg>
<span class="ui fav" style="left:1250.3px;top:125.00px;font-size:17.6px;line-height:17.6px;letter-spacing:-0.6px">Rist...</span>
<svg style="left:1298px;top:120px" width="24" height="24" viewBox="0 0 24 24"><path d="M6.500 1.500H17.300L22.300 6.500V22.500H6.500Z" fill="#fff" stroke="#ababab"/><path d="M17.300 1.500V6.500H22.300Z" fill="#f0f0f0" stroke="#ababab" stroke-width=".9"/><path d="M7 23.300H22.800" stroke="#d6d6d6" stroke-width=".9"/><path d="M15.600000000000001 12.799999999999999A5.700 5.700 0 1 0 14.4 16.2M4.7 12.9H15.600000000000001" fill="none" stroke="#2d8ad8" stroke-width="3.300"/><path d="M15.600000000000001 12.799999999999999A5.700 5.700 0 1 0 14.4 16.2M4.7 12.9H15.600000000000001" fill="none" stroke="#74cdf6" stroke-width="1.100"/><path d="M17.600 5.600C17.800 4.600 16 4.300 13.500 5.200 8 7.200 2.200 13 1.700 17.300 1.400 19.800 3.400 20.300 5.800 19.500" fill="none" stroke="#f8b400" stroke-width="1.700"/></svg>
<span class="ui fav" style="left:1327.8999999999999px;top:125.00px;font-size:17.6px;line-height:17.6px;letter-spacing:-1.17px">PET0...</span>
<svg style="left:1397px;top:117px" width="15" height="10" viewBox="0 0 15 10"><path d="M1 .8L5.500 5 1 9.200M8 .8L12.500 5 8 9.200" fill="none" stroke="#5f6fa0" stroke-width="1.800"/></svg>
<div style="left:0px;top:152px;width:1392px;height:874px;overflow:hidden;background:#fff"><div style="left:0;top:-152px;width:1392px;height:1080px"><div style="left:0px;top:152px;width:1275px;height:874px;background:#f4f4f4;border-right:1px solid #ccc"></div><div style="left:1287px;top:152px;width:1px;height:874px;background:#ccc"></div><div style="left:-5px;top:140px;width:239px;height:475px;background:#fff;border:1px solid #ccc"></div><div style="left:-5px;top:140px;width:217px;height:453px;background:#fafafa;border:1px solid #ccc"></div><div style="left:-5px;top:140px;width:201px;height:437px;background:#f5f5f5;border:1px solid #e2e2e2"></div><div style="left:84px;top:152px;width:5px;height:1.5px;background:#777"></div><div style="left:108px;top:152px;width:4px;height:1.5px;background:#777"></div><div style="left:116px;top:152px;width:6px;height:1.5px;background:#777"></div><div style="left:184px;top:152px;width:5px;height:1.5px;background:#777"></div><div style="left:-5px;top:164px;width:199px;height:344px;background:repeating-linear-gradient(90deg,#f0f0ee 0,#f0f0ee 2px,#f1f1ef 2px,#f1f1ef 4px);border:1px solid #ccc"></div><div style="left:-5px;top:168px;width:78px;height:27px;background:#fff;border:1px solid #d9d9d9;border-right:none"></div><div style="left:72px;top:168px;width:13px;height:27px;border:1px solid #d0d0d0;border-radius:0 3px 3px 0"></div><div style="left:-5px;top:169px;width:77px;height:25px;overflow:hidden"><span style="left:0px;top:4.42px;font-size:16.4px;line-height:16.4px;transform:scaleX(.86);transform-origin:left;left:-13.5px">advanced.style</span></div><div style="left:72px;top:169px;width:12px;height:25px;background:#f1f1ef;border-left:1px solid #e2e2e2"></div><svg style="left:75px;top:180px" width="8" height="6" viewBox="0 0 8 6"><path d="M0 0H7.600L3.800 5.200Z" fill="#3f9be8"/></svg><div class="tb" style="left:88px;top:168px;width:26px;height:27px;"></div><svg style="left:90px;top:170px" width="22" height="22" viewBox="0 0 22 22"><g transform="rotate(-38 11 11)"><rect x="1.500" y="6" width="19" height="10" rx="3" fill="#f4f4f4" stroke="#c9c9c9"/><path d="M12 6H17.500A3 3 0 0 1 20.500 9V13A3 3 0 0 1 17.500 16H12Z" fill="#f0979d"/></g></svg><div class="tb" style="left:116px;top:168px;width:26px;height:27px;"></div><svg style="left:118px;top:170px" width="22" height="22" viewBox="0 0 22 22"><path d="M17.500 1.500L20 3.500 15.500 8.500 13.500 6.800Z" fill="#d08a3c"/><path d="M11.500 6.500L16.500 10.500 14.800 12.500 9.800 8.500Z" fill="#9b9b9b"/><path d="M9.800 8.500L14.800 12.500 10.500 20.500 2 13.500Z" fill="#d9a14e" stroke="#a8742d" stroke-width=".7"/><path d="M5 14L9 17.500M7.500 12L11.500 15.500" stroke="#a8742d" stroke-width=".8"/></svg><div class="tb" style="left:-5px;top:200px;width:31px;height:27px;"></div><div class="tb" style="left:25px;top:200px;width:13px;height:27px;border-left:none;border-radius:0 3px 3px 0"></div><svg style="left:2px;top:205px" width="22" height="18" viewBox="0 0 22 18"><g fill="#555"><circle cx="3.300" cy="2.600" r="1.800"/><circle cx="3.300" cy="9" r="1.800"/><circle cx="3.300" cy="15.400" r="1.800"/><rect x="8" y="1.900" width="11" height="1.400"/><rect x="8" y="8.300" width="11" height="1.400"/><rect x="8" y="14.700" width="11" height="1.400"/></g></svg><svg style="left:27.500px;top:212px" width="8" height="6" viewBox="0 0 8 6"><path d="M0 0H7.600L3.800 5.200Z" fill="#3f9be8"/></svg><div class="tb" style="left:40px;top:200px;width:27px;height:27px;"></div><span style="left:45.8px;top:205.30px;font-size:15px;line-height:15px;font-family:'Liberation Serif',serif;font-weight:bold;color:#444">A</span><span style="left:57.2px;top:211.00px;font-size:8.5px;line-height:8.5px;font-family:'Liberation Serif',serif;font-weight:bold;color:#444">2</span><div class="tb" style="left:68px;top:200px;width:27px;height:27px;"></div><span style="left:74.8px;top:205.30px;font-size:15px;line-height:15px;font-family:'Liberation Serif',serif;font-weight:bold;color:#444">A</span><span style="left:84.2px;top:205.80px;font-size:8.5px;line-height:8.5px;font-family:'Liberation Serif',serif;font-weight:bold;color:#444">2</span><div class="tb" style="left:97px;top:200px;width:26px;height:27px;border-color:#e4e4e4"></div><div class="tb" style="left:122px;top:200px;width:13px;height:27px;border-left:none;border-color:#e4e4e4;border-radius:0 3px 3px 0"></div><span style="left:102px;top:203.53px;font-size:10px;line-height:10px;font-family:'Liberation Serif',serif;color:#dadada">a</span><span style="left:108px;top:208.15px;font-size:14px;line-height:14px;font-family:'Liberation Serif',serif;color:#dadada">A</span><svg style="left:124.500px;top:212px" width="8" height="6" viewBox="0 0 8 6"><path d="M0 0H7.600L3.800 5.200Z" fill="#b9d9f3"/></svg><div class="tb" style="left:137px;top:200px;width:27px;height:27px;"></div><div style="left:140px;top:204px;width:20px;height:18px;background:#fbfbfb;border:1px solid #d2d2d2;border-bottom:2px solid #bdbdbd"></div><span style="left:143.5px;top:205.46px;font-size:16px;line-height:16px;font-family:'Liberation Serif',serif;font-weight:bold;color:#3a3a3a">Ω</span><div class="tb" style="left:165px;top:200px;width:27px;height:27px;"></div><div style="left:168.5px;top:213px;width:19px;height:1.5px;background:#a9a9a9"></div><div class="tb" style="left:1.5px;top:232px;width:25px;height:27px;"></div><div class="tb" style="left:29px;top:232px;width:26px;height:27px;"></div><div style="left:62px;top:225.5px;width:1px;height:29.5px;background:#cfcfcf"></div><div class="tb" style="left:68px;top:232px;width:26px;height:27px;"></div><div class="tb" style="left:96px;top:232px;width:26px;height:27px;"></div><svg style="left:4px;top:235px" width="20" height="21" viewBox="0 0 20 21"><rect x=".5" y="1.500" width="19" height="17" fill="#fafafa" stroke="#dcdcdc"/><rect x="1" y="18.500" width="18" height="1.500" fill="#d5d5d5"/><rect x="2" y="3" width="16" height="14" fill="#dff0fa"/><path d="M2 6.500H18M2 10H18M2 13.500H18M6 3V17M10 3V17M14 3V17" stroke="#fff" stroke-width="1"/><rect x="10.500" y="1" width="4" height="16.500" rx="1.500" fill="#a8dd9a"/><path d="M10.500 .5H14.500L12.500 -1.500Z" fill="#a8dd9a"/></svg><svg style="left:32px;top:235px" width="20" height="21" viewBox="0 0 20 21"><rect x=".5" y="1.500" width="19" height="17" fill="#fafafa" stroke="#dcdcdc"/><rect x="1" y="18.500" width="18" height="1.500" fill="#d5d5d5"/><rect x="2" y="3" width="16" height="14" fill="#dff0fa"/><path d="M2 6.500H18M2 10H18M2 13.500H18M6 3V17M10 3V17M14 3V17" stroke="#fff" stroke-width="1"/><rect x="8.500" y="2" width="3.500" height="16.500" rx="1.500" fill="#eaa7a0"/></svg><svg style="left:71px;top:235px" width="20" height="21" viewBox="0 0 20 21"><rect x=".5" y="1.500" width="19" height="17" fill="#fafafa" stroke="#dcdcdc"/><rect x="1" y="18.500" width="18" height="1.500" fill="#d5d5d5"/><rect x="2" y="3" width="16" height="14" fill="#c9d7f4"/><path d="M2 6.500H18M2 10H18M2 13.500H18M6 3V17M10 3V17M14 3V17" stroke="#fff" stroke-width="1.200"/></svg><svg style="left:99px;top:235px" width="20" height="21" viewBox="0 0 20 21"><rect x=".5" y="1.500" width="19" height="17" fill="#fafafa" stroke="#dcdcdc"/><rect x="1" y="18.500" width="18" height="1.500" fill="#d5d5d5"/><rect x="2" y="3" width="16" height="14" fill="#d6edf9"/><rect x="6" y="6" width="12" height="11" fill="#fbfbfb"/><path d="M14 3V6" stroke="#fff"/></svg><div class="tb" style="left:-5px;top:265px;width:28px;height:27px;"></div><svg style="left:-1px;top:271px" width="20" height="16" viewBox="0 0 20 16"><defs><linearGradient id="wg" x1="0" x2="0" y1="0" y2="1"><stop offset="0" stop-color="#c9c9c9"/><stop offset="1" stop-color="#8f8f8f"/></linearGradient></defs><rect x="-2" y=".5" width="21" height="15" rx="1.500" fill="url(#wg)" stroke="#8a8a8a"/><rect x="-1" y="3.500" width="12" height="11" fill="#f6f6f6"/><rect x="11.500" y="3.500" width="6.500" height="11" fill="#e6eefb"/><path d="M12.500 5H17M12.500 7.500H17M12.500 10H17M12.500 12.500H17" stroke="#6f9be6" stroke-width="1"/><rect x="13" y="1.200" width="5" height="1.600" fill="#3d6fd6"/></svg><div style="left:-5px;top:294px;width:198px;height:1px;background:#ccc"></div><div style="left:-5px;top:295px;width:172px;height:186px;background:#fff"></div><div style="left:167px;top:295px;width:26px;height:186px;background:repeating-linear-gradient(90deg,#f0f0ee 0,#f0f0ee 2px,#f1f1ef 2px,#f1f1ef 4px);"></div><svg style="left:171px;top:320px" width="19" height="15" viewBox="0 0 19 15"><path d="M1.300 14.400V8.600L9.500 1 17.700 8.600V14.400L9.500 6.800Z" fill="#50555b"/></svg><div style="left:169px;top:347px;width:22px;height:69px;background:#cdcdcd"></div><svg style="left:171px;top:441px" width="19" height="15" viewBox="0 0 19 15"><path d="M1.300 .6V6.400L9.500 14 17.700 6.400V.6L9.500 8.200Z" fill="#50555b"/></svg><div style="left:-5px;top:481px;width:198px;height:1px;background:#ccc"></div><span style="left:106.0px;top:486.73px;font-size:14.85px;line-height:14.85px;">Words: 0</span><svg style="left:180px;top:494px" width="13" height="13" viewBox="0 0 13 13"><path d="M1 12.500L12.500 1M5 12.500L12.500 5M9 12.500L12.500 9" stroke="#9a9a9a" stroke-width="1.300"/><path d="M2 13L13 2M6 13L13 6" stroke="#fff" stroke-width=".8"/></svg><div style="left:-20px;top:520px;width:86px;height:28px;border:1px solid #cfcfcf;border-radius:7px;background:linear-gradient(to bottom,#f7f7f7 0,#f1f1f1 48%,#e6e6e6 52%,#e2e2e2 100%);box-shadow:0 1px 1px rgba(0,0,0,.06)"></div><span style="right:1333.4px;top:526.64px;font-size:14.6px;line-height:14.6px;font-weight:bold;color:#2e2e2e">ments ON</span><div style="left:264px;top:130px;width:1111px;height:91px;background:#fff;border:1px solid #ccc"></div><div class="cell" style="left:288px;top:140px;width:177px;height:19px;"></div><div class="cell" style="left:288px;top:161px;width:177px;height:35px;"></div><span class="lbl" style="right:934.7px;top:170.96px;font-size:16.0px;line-height:16.0px;">Percentuale</span><div class="inp" style="left:469px;top:169px;width:151px;height:20px;"></div><span style="left:472px;top:172.04px;font-size:13.18px;line-height:13.18px;">1.5</span><span style="left:626.6px;top:170.44px;font-size:14.6px;line-height:14.6px;">%</span><div style="left:264px;top:242px;width:1111px;height:800px;background:#fff;border:1px solid #ccc"></div><div style="left:286px;top:242px;width:175px;height:1px;background:#fff"></div><span style="left:290.6px;top:234.24px;font-size:15.9px;line-height:15.9px;font-weight:bold;color:#146295">Specific configuration</span><div class="cell" style="left:288px;top:260px;width:607px;height:34px;"></div><span class="lbl lb" style="right:505.70000000000005px;top:269.36px;font-size:16.0px;line-height:16.0px;letter-spacing:0px">URL</span><div class="inp" style="left:899px;top:267px;width:150px;height:20px;"></div><div style="left:900px;top:268px;width:148px;height:18px;overflow:hidden"><span style="left:1.3px;top:2.64px;font-size:13.18px;line-height:13.18px;">https://www.paypal.com/cgi-bin/webscr</span></div><div class="cell" style="left:288px;top:297px;width:607px;height:34px;"></div><span class="lbl lb" style="right:505.70000000000005px;top:306.56px;font-size:16.0px;line-height:16.0px;letter-spacing:0px">E-mail</span><div class="inp" style="left:899px;top:304px;width:150px;height:20px;"></div><div style="left:900px;top:305px;width:148px;height:18px;overflow:hidden"><span style="left:1.3px;top:2.64px;font-size:13.18px;line-height:13.18px;">lacasettabio@tiscali.it</span></div><div class="cell" style="left:288px;top:334px;width:607px;height:35px;"></div><span class="lbl lb" style="right:505.70000000000005px;top:343.36px;font-size:16.0px;line-height:16.0px;letter-spacing:0px">Indirizzo cliente</span><div style="left:899px;top:341px;width:187.5px;height:20px;border:1px solid #bdbdbd;background:#fff"></div><div style="left:1062.3px;top:342px;width:23.2px;height:18px;border:1px solid #adadad;background:linear-gradient(to bottom,#f2f2f2,#e3e3e3)"></div><svg style="left:1067.9px;top:347px" width="12" height="8" viewBox="0 0 12 8"><path d="M1 1L6 6.200 11 1" fill="none" stroke="#111" stroke-width="1.700"/></svg><span style="left:902.4px;top:343.54px;font-size:13.18px;line-height:13.18px;">Indirizzo per la fatturazione</span><div class="cell" style="left:288px;top:371px;width:607px;height:40px;"></div><span class="lbl lb" style="right:505.70000000000005px;top:383.36px;font-size:16.0px;line-height:16.0px;letter-spacing:0px">Sovrascrivi indirizzo</span><div class="rad" style="left:899px;top:378px;width:25px;height:26px"><i style="top:4px;height:16px"></i></div><span style="left:934.3px;top:385.50px;font-size:15.95px;line-height:15.95px;">No</span><div class="rad" style="left:965px;top:378px;width:25px;height:26px"><i style="top:4px;height:16px"><b style="left:3px;top:3.0px;width:8px;height:8px;border-radius:50%;background:#0a0a0a"></b></i></div><span style="left:1000.4px;top:385.50px;font-size:15.95px;line-height:15.95px;">Sì</span><div class="cell" style="left:288px;top:413px;width:607px;height:40px;"></div><span class="lbl lb" style="right:505.70000000000005px;top:424.86px;font-size:16.0px;line-height:16.0px;letter-spacing:0px">Nessuna spedizione</span><div class="rad" style="left:899px;top:421px;width:25px;height:25px"><i style="top:4px;height:15px"></i></div><span style="left:934.1px;top:427.50px;font-size:15.95px;line-height:15.95px;">2 Richiesto</span><div class="rad" style="left:1024px;top:421px;width:25px;height:25px"><i style="top:4px;height:15px"></i></div><span style="left:1059.8px;top:427.50px;font-size:15.95px;line-height:15.95px;">1 Si</span><div class="rad" style="left:1097px;top:421px;width:25px;height:25px"><i style="top:4px;height:15px"><b style="left:3px;top:2.5px;width:8px;height:8px;border-radius:50%;background:#0a0a0a"></b></i></div><span style="left:1131.8px;top:427.50px;font-size:15.95px;line-height:15.95px;">0 No</span><div class="cell" style="left:288px;top:456px;width:607px;height:40px;"></div><span class="lbl lb" style="right:505.70000000000005px;top:467.66px;font-size:16.0px;line-height:16.0px;letter-spacing:0px">Permetti le notifiche di pagamento da PayPal/carte di credito con contributo di</span><div class="rad" style="left:899px;top:463px;width:25px;height:25px"><i style="top:4px;height:16px"></i></div><span style="left:934.3px;top:470.50px;font-size:15.95px;line-height:15.95px;">No</span><div class="rad" style="left:965px;top:463px;width:25px;height:25px"><i style="top:4px;height:16px"><b style="left:3px;top:3.0px;width:8px;height:8px;border-radius:50%;background:#0a0a0a"></b></i></div><span style="left:1000.4px;top:470.50px;font-size:15.95px;line-height:15.95px;">Sì</span><div class="cell" style="left:288px;top:498px;width:607px;height:40px;"></div><span class="lbl lb" style="right:505.70000000000005px;top:509.96px;font-size:16.0px;line-height:16.0px;letter-spacing:0px">Spedisci dettagli dell&#39;ordine</span><div class="rad" style="left:899px;top:506px;width:25px;height:25px"><i style="top:3px;height:16px"></i></div><span style="left:934.3px;top:512.50px;font-size:15.95px;line-height:15.95px;">No</span><div class="rad" style="left:965px;top:506px;width:25px;height:25px"><i style="top:3px;height:16px"><b style="left:3px;top:3.0px;width:8px;height:8px;border-radius:50%;background:#0a0a0a"></b></i></div><span style="left:1000.4px;top:512.50px;font-size:15.95px;line-height:15.95px;">Sì</span><div class="cell" style="left:288px;top:541px;width:607px;height:40px;"></div><span class="lbl lb" style="right:505.70000000000005px;top:553.06px;font-size:16.0px;line-height:16.0px;letter-spacing:0px">Mostra note</span><div class="rad" style="left:899px;top:548px;width:25px;height:25px"><i style="top:4px;height:16px"><b style="left:3px;top:3.0px;width:8px;height:8px;border-radius:50%;background:#0a0a0a"></b></i></div><span style="left:934.3px;top:555.50px;font-size:15.95px;line-height:15.95px;">No</span><div class="rad" style="left:965px;top:548px;width:25px;height:25px"><i style="top:4px;height:16px"></i></div><span style="left:1000.4px;top:555.50px;font-size:15.95px;line-height:15.95px;">Sì</span><div class="cell" style="left:288px;top:583px;width:607px;height:40px;"></div><span class="lbl lb" style="right:505.70000000000005px;top:594.66px;font-size:16.0px;line-height:16.0px;letter-spacing:0px">Abilita modo di validazione</span><div class="rad" style="left:899px;top:591px;width:25px;height:25px"><i style="top:3px;height:16px"><b style="left:3px;top:3.0px;width:8px;height:8px;border-radius:50%;background:#0a0a0a"></b></i></div><span style="left:934.3px;top:597.50px;font-size:15.95px;line-height:15.95px;">No</span><div class="rad" style="left:965px;top:591px;width:25px;height:25px"><i style="top:3px;height:16px"></i></div><span style="left:1000.4px;top:597.50px;font-size:15.95px;line-height:15.95px;">Sì</span><div class="cell" style="left:288px;top:626px;width:607px;height:40px;"></div><span class="lbl lb" style="right:505.70000000000005px;top:636.76px;font-size:16.0px;line-height:16.0px;letter-spacing:0px">Debug</span><div class="rad" style="left:899px;top:633px;width:25px;height:25px"><i style="top:4px;height:15px"><b style="left:3px;top:2.5px;width:8px;height:8px;border-radius:50%;background:#0a0a0a"></b></i></div><span style="left:934.3px;top:639.00px;font-size:15.95px;line-height:15.95px;">No</span><div class="rad" style="left:965px;top:633px;width:25px;height:25px"><i style="top:4px;height:15px"></i></div><span style="left:1000.4px;top:639.00px;font-size:15.95px;line-height:15.95px;">Sì</span><div class="cell" style="left:288px;top:668px;width:607px;height:35px;"></div><span class="lbl lb" style="right:505.70000000000005px;top:677.26px;font-size:16.0px;line-height:16.0px;letter-spacing:0px">Url dopo la cancellazione</span><div class="inp" style="left:899px;top:676px;width:150px;height:19px;"></div><div class="cell" style="left:288px;top:705px;width:607px;height:35px;"></div><span class="lbl lb" style="right:505.70000000000005px;top:714.26px;font-size:16.0px;line-height:16.0px;letter-spacing:0px">Url di ritorno</span><div class="inp" style="left:899px;top:713px;width:150px;height:19px;"></div><div class="cell" style="left:288px;top:742px;width:607px;height:35px;"></div><span class="lbl lb" style="right:505.70000000000005px;top:751.26px;font-size:16.0px;line-height:16.0px;letter-spacing:0px">url intestazione Paypal</span><div class="inp" style="left:899px;top:750px;width:150px;height:19px;"></div><div class="cell" style="left:288px;top:779px;width:607px;height:79px;"></div><span class="lbl lb" style="right:505.70000000000005px;top:810.06px;font-size:16.0px;line-height:16.0px;letter-spacing:0px">IPs</span><div style="left:899px;top:787px;width:444px;height:46px;border:1px solid #c0c0c0;background:#fff"></div><div style="left:1321px;top:788px;width:21px;height:44px;background:#f8f8f8"></div><svg style="left:1324px;top:793px" width="16" height="12" viewBox="0 0 16 12"><path d="M.8 11V7.600L8 .8 15.200 7.600V11L8 4.600Z" fill="#c6c6c6"/></svg><svg style="left:1324px;top:815.500px" width="16" height="12" viewBox="0 0 16 12"><path d="M.8 1V4.400L8 11.200 15.200 4.400V1L8 7.400Z" fill="#c6c6c6"/></svg><span style="left:898.6px;top:840.67px;font-size:14.8px;line-height:14.8px;color:#1a5d9c">Rinfresca IPs</span><div class="cell" style="left:288px;top:860px;width:607px;height:35px;"></div><span class="lbl lb" style="right:505.70000000000005px;top:868.66px;font-size:16.0px;line-height:16.0px;letter-spacing:0px">Stato non valido</span><div style="left:899px;top:868px;width:108px;height:19px;border:1px solid #bdbdbd;background:#fff"></div><div style="left:982.8px;top:869px;width:23.2px;height:17px;border:1px solid #adadad;background:linear-gradient(to bottom,#f2f2f2,#e3e3e3)"></div><svg style="left:988.4px;top:874px" width="12" height="8" viewBox="0 0 12 8"><path d="M1 1L6 6.200 11 1" fill="none" stroke="#111" stroke-width="1.700"/></svg><span style="left:902.4px;top:869.84px;font-size:13.18px;line-height:13.18px;">Creato</span><div class="cell" style="left:288px;top:897px;width:607px;height:35px;"></div><span class="lbl lb" style="right:505.70000000000005px;top:905.96px;font-size:16.0px;line-height:16.0px;letter-spacing:0px">Stato pendente</span><div style="left:899px;top:905px;width:108px;height:19px;border:1px solid #bdbdbd;background:#fff"></div><div style="left:982.8px;top:906px;width:23.2px;height:17px;border:1px solid #adadad;background:linear-gradient(to bottom,#f2f2f2,#e3e3e3)"></div><svg style="left:988.4px;top:911px" width="12" height="8" viewBox="0 0 12 8"><path d="M1 1L6 6.200 11 1" fill="none" stroke="#111" stroke-width="1.700"/></svg><span style="left:902.4px;top:906.84px;font-size:13.18px;line-height:13.18px;">Creato</span><div class="cell" style="left:288px;top:934px;width:607px;height:35px;"></div><span class="lbl lb" style="right:505.70000000000005px;top:942.86px;font-size:16.0px;line-height:16.0px;letter-spacing:0px">Stato verificato</span><div style="left:899px;top:942px;width:108px;height:19px;border:1px solid #bdbdbd;background:#fff"></div><div style="left:982.8px;top:943px;width:23.2px;height:17px;border:1px solid #adadad;background:linear-gradient(to bottom,#f2f2f2,#e3e3e3)"></div><svg style="left:988.4px;top:948px" width="12" height="8" viewBox="0 0 12 8"><path d="M1 1L6 6.200 11 1" fill="none" stroke="#111" stroke-width="1.700"/></svg><span style="left:902.4px;top:943.84px;font-size:13.18px;line-height:13.18px;">Pagato</span><div class="cell" style="left:288px;top:971px;width:607px;height:40px;"></div><span class="lbl lb" style="right:505.70000000000005px;top:982.76px;font-size:16.0px;line-height:16.0px;letter-spacing:0px">Return method</span><div class="rad" style="left:899px;top:979px;width:25px;height:25px"><i style="top:4px;height:15px"></i></div><span style="left:934.3px;top:985.50px;font-size:15.95px;line-height:15.95px;">No</span><div class="rad" style="left:965px;top:979px;width:25px;height:25px"><i style="top:4px;height:15px"><b style="left:3px;top:2.5px;width:8px;height:8px;border-radius:50%;background:#0a0a0a"></b></i></div><span style="left:1000.4px;top:985.50px;font-size:15.95px;line-height:15.95px;">Sì</span></div></div>
<div style="left:1392px;top:152px;width:25px;height:899px;background:repeating-linear-gradient(90deg,#f0f0ee 0,#f0f0ee 2px,#f1f1ef 2px,#f1f1ef 4px);"></div>
<svg style="left:1395px;top:177px" width="19" height="15" viewBox="0 0 19 15"><path d="M1 14.200V8.700L9.500 .8 18 8.700V14.200L9.500 6.300Z" fill="#50555b"/></svg>
<div style="left:1394px;top:402px;width:21px;height:418px;background:#cdcdcd"></div>
<svg style="left:1395px;top:986px" width="19" height="15" viewBox="0 0 19 15"><path d="M1 .8V6.300L9.500 14.200 18 6.300V.8L9.500 8.700Z" fill="#50555b"/></svg>
<div style="left:0px;top:1026px;width:1392px;height:25px;background:#f1f1ef"></div>
<div style="left:0px;top:1028px;width:1340px;height:20.5px;background:#cdcdcd"></div>
<svg style="left:1352px;top:1030px" width="15" height="18" viewBox="0 0 15 18"><path d="M1.500 .8H6L13.800 8.700 6 16.800H1.500L9.300 8.700Z" fill="#50555b"/></svg>
<div style="left:0px;top:1051px;width:1417px;height:1px;background:#a5a5a5"></div>
<div style="left:0px;top:1052px;width:1417px;height:1px;background:#fbfbfb"></div>
<div style="left:0px;top:1053px;width:1417px;height:25px;background:#f0eeed"></div>
<div style="left:0px;top:1078px;width:1417px;height:1px;background:#7f93b0"></div>
<div style="left:0px;top:1079px;width:1417px;height:1px;background:#b9d1ea"></div>
<div style="left:0px;top:1078px;width:125px;height:1px;background:#222"></div>
<div style="left:140px;top:1078px;width:215px;height:1px;background:#333"></div>
<svg style="left:1278px;top:1054px" width="24" height="24" viewBox="0 0 24 24"><path d="M13 13.500L20.500 22.300" stroke="#8a4a22" stroke-width="3.200" stroke-linecap="round"/><path d="M13.500 13L20.800 21.500" stroke="#c98a55" stroke-width="1" stroke-linecap="round"/><circle cx="8.700" cy="8.700" r="7.200" fill="#f4f8fd" stroke="#9aa3ad" stroke-width="1.300"/><path d="M8.700 4.500V12.900M4.500 8.700H12.900" stroke="#1f6fd0" stroke-width="2.300"/></svg>
<span class="ui" style="left:1302.8px;top:1060.50px;font-size:17.6px;line-height:17.6px;letter-spacing:0px">124%</span>
<svg style="left:1371px;top:1064px" width="12" height="7" viewBox="0 0 12 7"><path d="M0 0H11.600L5.800 6.200Z" fill="#000"/></svg>
<svg style="left:1404px;top:1065px" width="12" height="12" viewBox="0 0 12 12"><rect x="9" y="1" width="2" height="2" fill="#b9b9b9"/><rect x="5" y="5" width="2" height="2" fill="#b9b9b9"/><rect x="9" y="5" width="2" height="2" fill="#b9b9b9"/><rect x="1" y="9" width="2" height="2" fill="#b9b9b9"/><rect x="5" y="9" width="2" height="2" fill="#b9b9b9"/><rect x="9" y="9" width="2" height="2" fill="#b9b9b9"/></svg>

</body></html>
